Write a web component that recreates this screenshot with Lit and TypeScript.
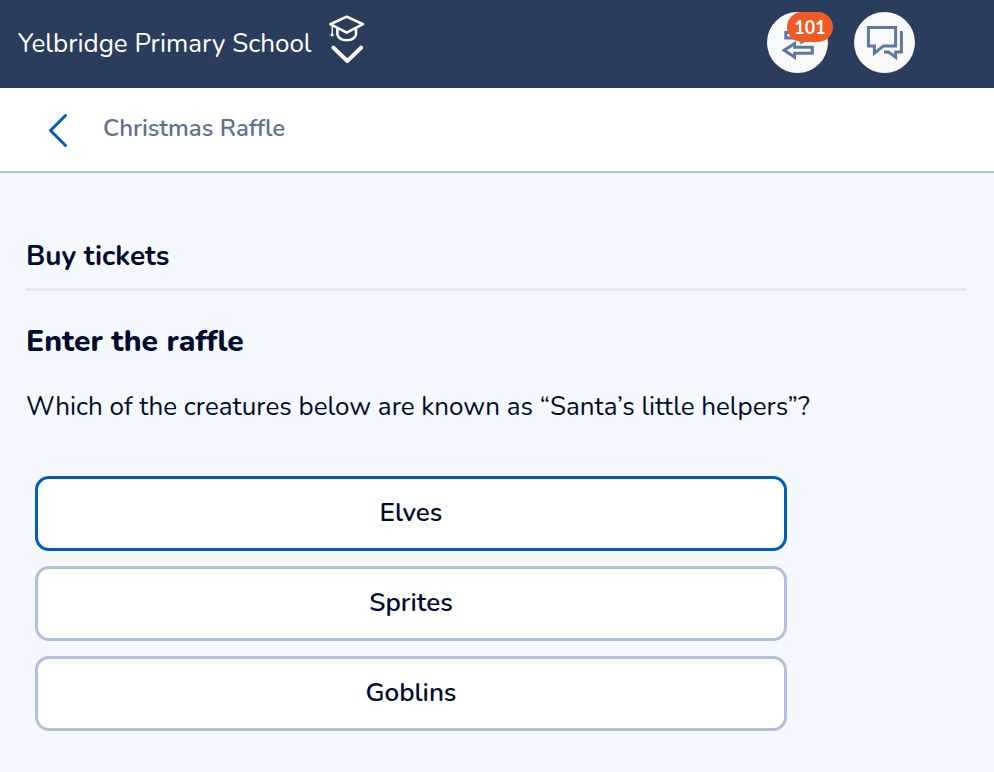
import { LitElement, html, css } from "lit";
import { customElement, state } from "lit/decorators.js";

@customElement("app-root")
export class AppRoot extends LitElement {
  @state() private selected = "Elves";

  private answers = ["Elves", "Sprites", "Goblins"];

  static styles = css`
    :host {
      display: block;
      min-height: 100vh;
      background: #f5f8ff;
      color: #000c2e;
      font-family: Nunito, Lato, sans-serif;
      font-size: 26px;
      line-height: 32px;
    }
    * { box-sizing: border-box; }
    svg { display: block; fill: none; }
    button { font: inherit; color: inherit; cursor: pointer; }
    h1, h2, h3, p { margin: 0; }
    .top {
      display: flex;
      align-items: flex-start;
      justify-content: space-between;
      min-height: 88px;
      padding: 12px 79px 12px 18px;
      background: #2a3d5c;
      color: #fff;
    }
    .school {
      display: flex;
      align-items: flex-end;
      gap: 16px;
      padding: 2px 0 0;
      border: 0;
      background: none;
      font-weight: 400;
      white-space: nowrap;
    }
    .school span { padding-bottom: 6px; }
    .actions { display: flex; gap: 26px; }
    .round {
      position: relative;
      width: 61px;
      height: 61px;
      padding: 0;
      border: 0;
      border-radius: 50%;
      background: #f8f9fa;
      color: #60779c;
    }
    .badge {
      position: absolute;
      top: 0;
      left: 20px;
      width: 46px;
      border-radius: 15px;
      background: #f15a22;
      color: #fff;
      font-family: Lato, sans-serif;
      font-size: 18px;
      font-weight: 700;
      line-height: 30px;
      text-align: center;
    }
    .bar {
      display: flex;
      align-items: center;
      gap: 32px;
      height: 85px;
      padding: 0 46px;
      background: #fff;
      border-bottom: 2px solid #b2c0da;
    }
    .back { display: block; color: #005eb8; }
    .title {
      padding-bottom: 4px;
      color: #60708f;
      font-size: 24px;
      font-weight: 600;
    }
    main { padding: 67px 28px 40px 26px; }
    .heading {
      padding-bottom: 16px;
      border-bottom: 3px solid #e4e8f5;
      font-size: 28px;
      font-weight: 700;
    }
    .sub {
      padding-top: 35px;
      font-size: 30px;
      font-weight: 800;
    }
    .question { padding-top: 33px; }
    .answers {
      display: flex;
      flex-direction: column;
      gap: 15px;
      width: 80%;
      margin: 53px 0 0 9px;
    }
    .answer {
      height: 75px;
      padding: 0 0 2px;
      border: 3px solid #b2c0da;
      border-radius: 14px;
      background: #fff;
      font-weight: 600;
    }
    .answer[aria-pressed="true"] { border-color: #005eb8; }
  `;

  render() {
    return html`
      <header class="top">
        <button class="school">
          <span>Yelbridge Primary School</span>
          <svg width="38" height="52" viewBox="0 0 38 52" stroke="currentColor" stroke-linejoin="round" stroke-linecap="round" aria-hidden="true">
            <path d="M18.7 2.6 35 10.2 18.7 18.6 2.4 10.2Z" stroke-width="2.6" />
            <path d="M9.4 14.8V20.5C10.5 24.3 14 26.2 18.7 26.2S26.9 24.3 28 20.5V14.8" stroke-width="2.6" />
            <path d="M4.3 11.5V19" stroke-width="1.4" />
            <circle cx="4.1" cy="20.8" r="1.6" fill="currentColor" stroke="none" />
            <path d="M5.4 33.6 19.3 47 33.2 33.6" stroke-width="4" />
          </svg>
        </button>
        <div class="actions">
          <button class="round" aria-label="Transfers, 101 new">
            <svg width="61" height="61" viewBox="0 0 61 61" stroke="currentColor" stroke-width="3" aria-hidden="true">
              <path d="M17.2 38.3 27.6 31.6V35.3H45.3V41.2H27.6V45.2Z" />
              <path d="M18.8 20.5H34.8V16L46 23.5 34.8 30V25.9H18.8Z" />
            </svg>
            <span class="badge">101</span>
          </button>
          <button class="round" aria-label="Messages">
            <svg width="61" height="61" viewBox="0 0 61 61" stroke="currentColor" stroke-width="3" aria-hidden="true">
              <path d="M14.4 15.6H41.6V33.9H29.6L20.4 41.2V33.9H14.4Z" />
              <path d="M47.4 19V39.9H41.7V45.3L34.5 40.1H30" />
            </svg>
          </button>
        </div>
      </header>
      <nav class="bar">
        <a class="back" href="#" aria-label="Back">
          <svg width="25" height="36" viewBox="0 0 25 36" stroke="currentColor" stroke-width="3" stroke-linecap="round" stroke-linejoin="round" aria-hidden="true">
            <path d="M19.5 3.5 4.5 18.5 19.5 33.5" />
          </svg>
        </a>
        <h1 class="title">Christmas Raffle</h1>
      </nav>
      <main>
        <h2 class="heading">Buy tickets</h2>
        <h3 class="sub">Enter the raffle</h3>
        <p class="question" id="question">Which of the creatures below are known as “Santa’s little helpers”?</p>
        <div class="answers" role="group" aria-labelledby="question">
          ${this.answers.map(
            (name) => html`<button
              class="answer"
              aria-pressed=${name === this.selected ? "true" : "false"}
              @click=${() => (this.selected = name)}
            >${name}</button>`
          )}
        </div>
      </main>
    `;
  }
}
